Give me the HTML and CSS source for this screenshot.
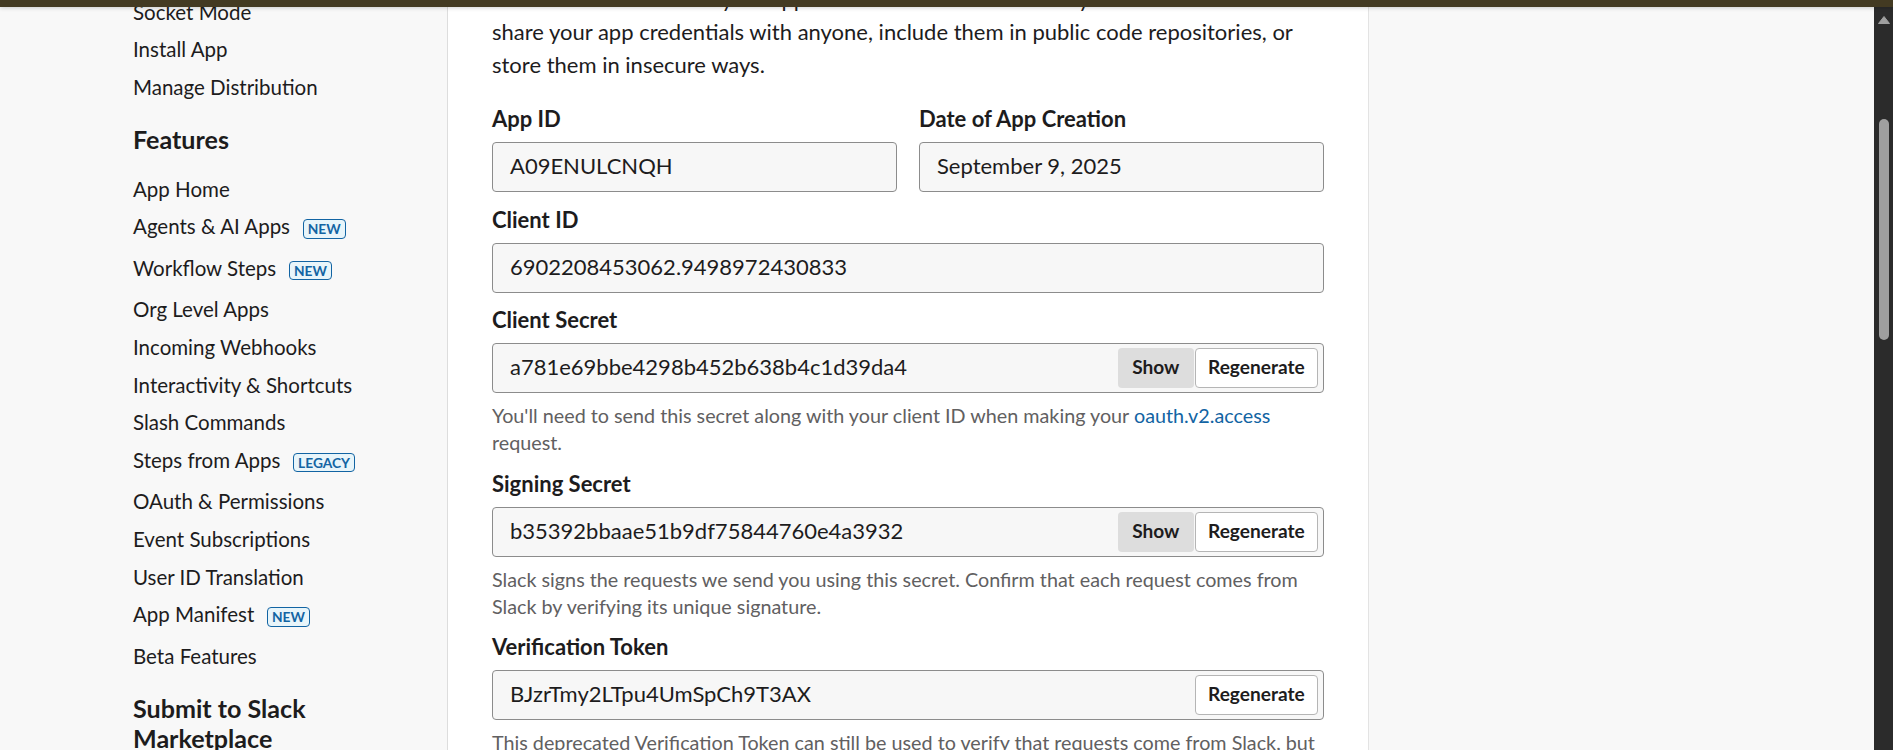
FILE: index.html
```html
<!DOCTYPE html>
<html lang="en">
<head>
<meta charset="utf-8">
<title>Basic Information | Slack API</title>
<link rel="stylesheet" href="styles.css">
</head>
<body>
<div class="topbar"></div>
<div class="page">
  <nav class="sidebar">
    <ul class="nav-list nav-list-first">
      <li class="nav-item">Socket Mode</li>
      <li class="nav-item">Install App</li>
      <li class="nav-item">Manage Distribution</li>
    </ul>
    <h3 class="nav-heading">Features</h3>
    <ul class="nav-list">
      <li class="nav-item">App Home</li>
      <li class="nav-item nav-item-badged">Agents &amp; AI Apps<span class="badge">NEW</span></li>
      <li class="nav-item nav-item-badged">Workflow Steps<span class="badge">NEW</span></li>
      <li class="nav-item">Org Level Apps</li>
      <li class="nav-item">Incoming Webhooks</li>
      <li class="nav-item">Interactivity &amp; Shortcuts</li>
      <li class="nav-item">Slash Commands</li>
      <li class="nav-item nav-item-badged">Steps from Apps<span class="badge">LEGACY</span></li>
      <li class="nav-item">OAuth &amp; Permissions</li>
      <li class="nav-item">Event Subscriptions</li>
      <li class="nav-item">User ID Translation</li>
      <li class="nav-item nav-item-badged">App Manifest<span class="badge">NEW</span></li>
      <li class="nav-item">Beta Features</li>
    </ul>
    <h3 class="nav-heading">Submit to Slack Marketplace</h3>
  </nav>

  <main class="card">
    <p class="intro">These credentials allow your app to access the Slack API. They are secret. Please don't share your app credentials with anyone, include them in public code repositories, or store them in insecure ways.</p>

    <div class="field-row">
      <div class="field">
        <div class="field-label">App ID</div>
        <div class="field-box"><span class="field-value">A09ENULCNQH</span></div>
      </div>
      <div class="field">
        <div class="field-label">Date of App Creation</div>
        <div class="field-box"><span class="field-value">September 9, 2025</span></div>
      </div>
    </div>

    <div class="field">
      <div class="field-label">Client ID</div>
      <div class="field-box"><span class="field-value">6902208453062.9498972430833</span></div>
    </div>

    <div class="field">
      <div class="field-label">Client Secret</div>
      <div class="field-box field-box-actions">
        <span class="field-value">a781e69bbe4298b452b638b4c1d39da4</span>
        <button class="btn btn-muted">Show</button>
        <button class="btn">Regenerate</button>
      </div>
      <p class="field-help">You'll need to send this secret along with your client ID when making your <a class="link" href="#">oauth.v2.access</a> request.</p>
    </div>

    <div class="field">
      <div class="field-label">Signing Secret</div>
      <div class="field-box field-box-actions">
        <span class="field-value">b35392bbaae51b9df75844760e4a3932</span>
        <button class="btn btn-muted">Show</button>
        <button class="btn">Regenerate</button>
      </div>
      <p class="field-help">Slack signs the requests we send you using this secret. Confirm that each request comes from Slack by verifying its unique signature.</p>
    </div>

    <div class="field">
      <div class="field-label">Verification Token</div>
      <div class="field-box field-box-actions">
        <span class="field-value">BJzrTmy2LTpu4UmSpCh9T3AX</span>
        <button class="btn">Regenerate</button>
      </div>
      <p class="field-help">This deprecated Verification Token can still be used to verify that requests come from Slack, but we strongly recommend using the above, more secure, signing secret instead.</p>
    </div>
  </main>

  <div class="filler"></div>

  <div class="scrollbar">
    <svg class="scroll-arrow" width="12" height="8" viewBox="0 0 12 8"><path d="M6 0.5 L11.5 7.5 L0.5 7.5 Z" fill="#9f9f9f" stroke="#9f9f9f" stroke-linejoin="round"/></svg>
    <div class="scroll-thumb"></div>
  </div>
</div>
</body>
</html>
```
FILE: styles.css
```css
* { box-sizing: border-box; }

html, body {
  margin: 0;
  padding: 0;
  height: 100%;
  overflow: hidden;
}

body {
  font-family: Lato, "Noto Sans", "Liberation Sans", sans-serif;
  color: #1d1c1d;
  background: #f8f8f8;
}

.topbar {
  position: fixed;
  top: 0;
  left: 0;
  right: 0;
  height: 7px;
  background: #433a22;
  box-shadow: 0 1px 4px rgba(0, 0, 0, 0.18);
  z-index: 10;
}

.page {
  display: flex;
  height: 750px;
}

/* Sidebar */
.sidebar {
  width: 447px;
  flex: none;
  padding-left: 133px;
  background: #f8f8f8;
  overflow: hidden;
}

.nav-list {
  list-style: none;
  margin: 0;
  padding: 0;
}

.nav-list-first {
  margin-top: -6.5px;
}

.nav-item {
  font-size: 20.5px;
  line-height: 37.6px;
  white-space: nowrap;
}

.nav-item-badged {
  padding-bottom: 4px;
}

.nav-heading {
  font-size: 25.1px;
  font-weight: 700;
  line-height: 30px;
  margin: 17.6px 0 16.7px;
  width: 230px;
}

.badge {
  display: inline-block;
  margin-left: 12.7px;
  padding: 0 4px;
  border: 1px solid #1264a3;
  border-radius: 4px;
  background: #e8f5fa;
  color: #1264a3;
  font-size: 13.75px;
  font-weight: 700;
  line-height: 17.5px;
}

/* Main card */
.card {
  width: 922px;
  flex: none;
  background: #ffffff;
  border-left: 1px solid #dddddd;
  border-right: 1px solid #e3e3e3;
  padding: 0 44px;
  overflow: hidden;
}

.intro {
  font-size: 22px;
  line-height: 33px;
  margin: -18px 0 23px;
}

.field-row {
  display: grid;
  grid-template-columns: 1fr 1fr;
  column-gap: 22px;
}

.field {
  margin-bottom: 12.5px;
}

.field-label {
  font-size: 22px;
  font-weight: 700;
  line-height: 30px;
  margin-bottom: 8px;
}

.field-box {
  display: flex;
  align-items: center;
  height: 50px;
  padding: 0 5px 0 17px;
  border: 1px solid #8c8c8c;
  border-radius: 4px;
  background: #f7f7f7;
}

.field-value {
  flex: 1;
  font-size: 22px;
  line-height: 26px;
  padding-bottom: 2px;
  white-space: nowrap;
}

.btn {
  height: 40px;
  padding: 0 12.3px 2px;
  border: 1px solid #b5b5b5;
  border-radius: 4px;
  background: #ffffff;
  color: #1d1c1d;
  font-family: Lato, "Noto Sans", sans-serif;
  font-size: 19.1px;
  font-weight: 700;
  line-height: 36px;
}

.btn + .btn {
  margin-left: 1px;
}

.btn-muted {
  background: #dddddd;
  border-color: transparent;
  padding-left: 13.3px;
  padding-right: 13.3px;
}

.field-help {
  margin: 9px 0 1px;
  font-size: 19.75px;
  line-height: 27px;
  color: #616061;
}

.link {
  color: #1264a3;
  text-decoration: none;
}

.filler {
  flex: 1;
  background: #f8f8f8;
}

/* Scrollbar */
.scrollbar {
  width: 19px;
  flex: none;
  background: #2b2b2b;
  display: flex;
  flex-direction: column;
  align-items: center;
  padding-top: 16px;
}

.scroll-arrow {
  display: block;
}

.scroll-thumb {
  width: 10px;
  height: 221px;
  margin-top: 95px;
  border-radius: 5px;
  background: #9f9f9f;
}
```
